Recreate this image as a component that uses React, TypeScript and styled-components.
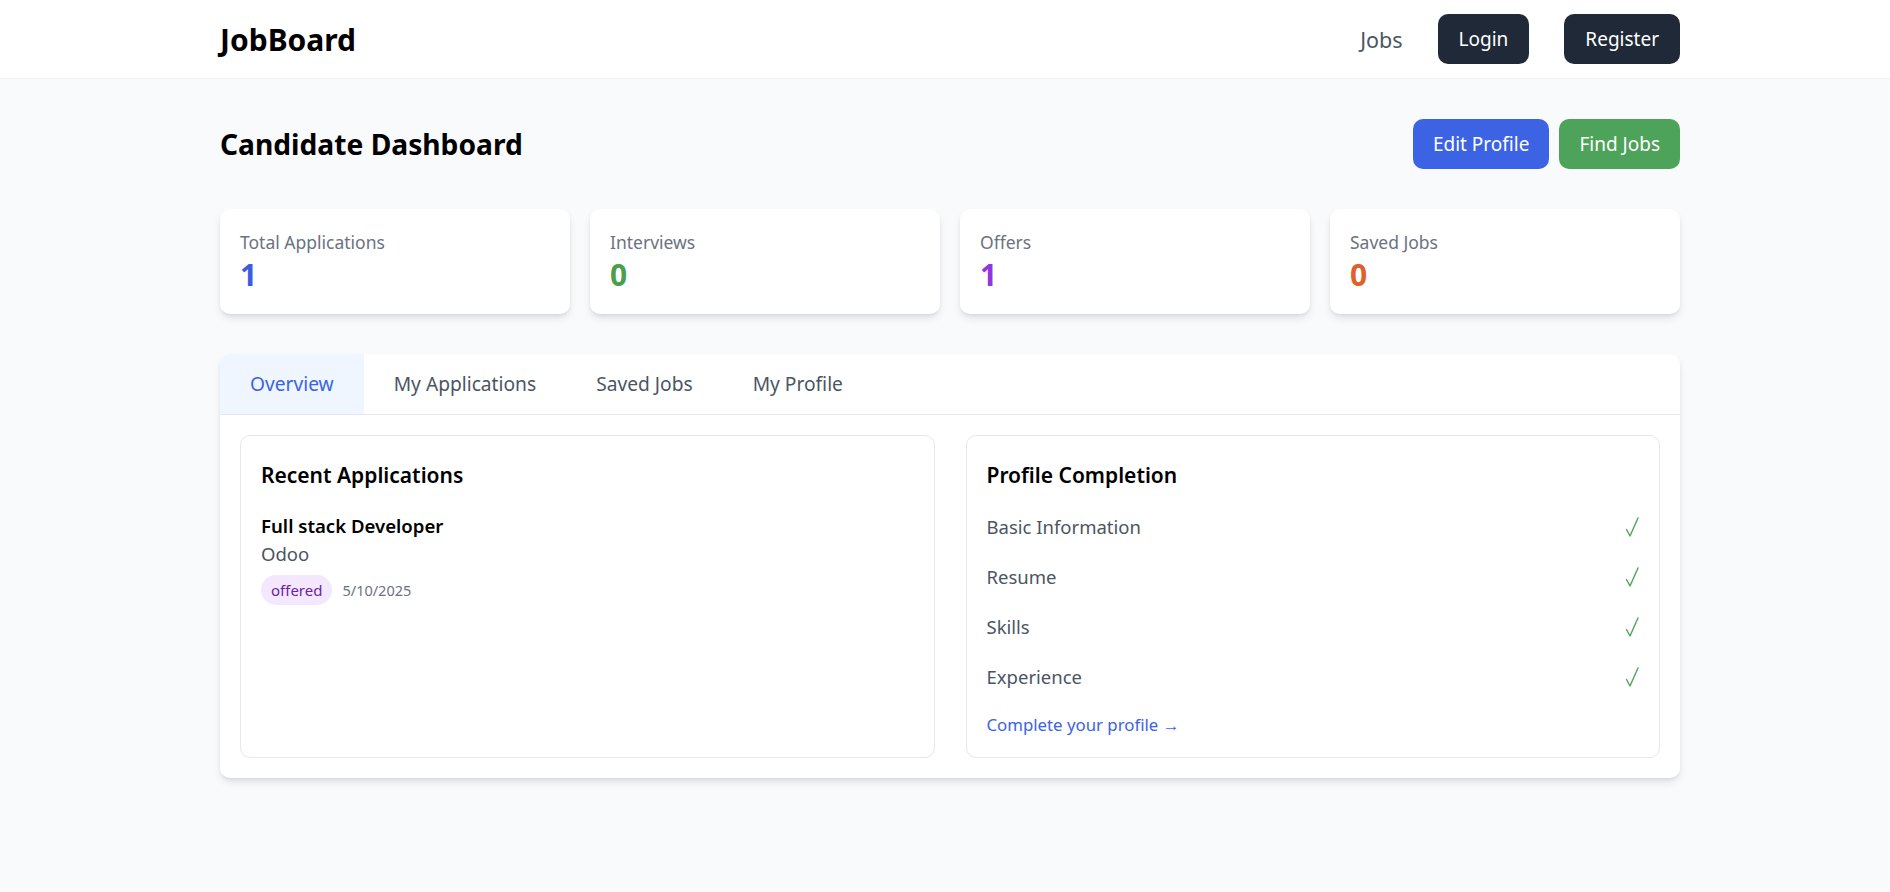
import React, { useState } from "react";
import styled, { createGlobalStyle } from "styled-components";

const GlobalStyle = createGlobalStyle`
  * { box-sizing: border-box; }
  body {
    margin: 0;
    background: #f9fafb;
    font-family: "Segoe UI", "Noto Sans", "Open Sans", sans-serif;
    color: #111827;
  }
`;

const stats = [
  { label: "Total Applications", value: 1, color: "#3b5ee0" },
  { label: "Interviews", value: 0, color: "#4a9f4f" },
  { label: "Offers", value: 1, color: "#9035e0" },
  { label: "Saved Jobs", value: 0, color: "#e0602a" },
];

const tabs = ["Overview", "My Applications", "Saved Jobs", "My Profile"];

const profileItems = ["Basic Information", "Resume", "Skills", "Experience"];

const CheckIcon = () => (
  <svg width="14" height="20" viewBox="0 0 14 20" fill="none">
    <path
      d="M1.5 12.5 L5 19 L13 1"
      stroke="#4ea35a"
      strokeWidth="1.4"
      strokeLinecap="round"
      strokeLinejoin="round"
    />
  </svg>
);

export default function App() {
  const [activeTab, setActiveTab] = useState("Overview");

  return (
    <Page>
      <GlobalStyle />
      <Header>
        <Container>
          <HeaderRow>
            <Logo>JobBoard</Logo>
            <Nav>
              <NavLink>Jobs</NavLink>
              <DarkButton>Login</DarkButton>
              <DarkButton>Register</DarkButton>
            </Nav>
          </HeaderRow>
        </Container>
      </Header>

      <Main>
        <Container>
          <TitleRow>
            <Title>Candidate Dashboard</Title>
            <Actions>
              <ActionButton $bg="#3b63e4">Edit Profile</ActionButton>
              <ActionButton $bg="#4ea35a">Find Jobs</ActionButton>
            </Actions>
          </TitleRow>

          <StatGrid>
            {stats.map((s) => (
              <StatCard key={s.label}>
                <StatLabel>{s.label}</StatLabel>
                <StatValue $color={s.color}>{s.value}</StatValue>
              </StatCard>
            ))}
          </StatGrid>

          <Panel>
            <TabBar>
              {tabs.map((t) => (
                <Tab
                  key={t}
                  $active={t === activeTab}
                  onClick={() => setActiveTab(t)}
                >
                  {t}
                </Tab>
              ))}
            </TabBar>
            <PanelBody>
              <InnerCard>
                <CardTitle>Recent Applications</CardTitle>
                <JobTitle>Full stack Developer</JobTitle>
                <Company>Odoo</Company>
                <MetaRow>
                  <Badge>offered</Badge>
                  <DateText>5/10/2025</DateText>
                </MetaRow>
              </InnerCard>
              <InnerCard>
                <CardTitle>Profile Completion</CardTitle>
                <CheckList>
                  {profileItems.map((item) => (
                    <CheckRow key={item}>
                      <span>{item}</span>
                      <CheckIcon />
                    </CheckRow>
                  ))}
                </CheckList>
                <ProfileLink href="#">Complete your profile →</ProfileLink>
              </InnerCard>
            </PanelBody>
          </Panel>
        </Container>
      </Main>
    </Page>
  );
}

const Page = styled.div`
  min-height: 100vh;
  background: #f9fafb;
`;

const Container = styled.div`
  max-width: 1470px;
  margin: 0 auto;
  padding-left: 10px;
`;

const Header = styled.header`
  background: #ffffff;
  height: 79px;
  border-bottom: 1px solid #f0f1f3;
`;

const HeaderRow = styled.div`
  display: flex;
  align-items: center;
  justify-content: space-between;
  height: 78px;
`;

const Logo = styled.div`
  font-size: 30px;
  font-weight: 700;
  color: #000;
`;

const Nav = styled.nav`
  display: flex;
  align-items: center;
  gap: 35px;
`;

const NavLink = styled.a`
  font-size: 21.5px;
  color: #4b5563;
  cursor: pointer;
`;

const DarkButton = styled.button`
  font-family: inherit;
  font-size: 19px;
  line-height: 30px;
  padding: 10px 21px;
  background: #1f2937;
  color: #fff;
  border: none;
  border-radius: 10px;
  cursor: pointer;
`;

const Main = styled.main`
  padding-top: 40px;
`;

const TitleRow = styled.div`
  display: flex;
  align-items: center;
  justify-content: space-between;
`;

const Title = styled.h1`
  margin: 0;
  font-size: 28.2px;
  font-weight: 700;
  color: #000;
`;

const Actions = styled.div`
  display: flex;
  gap: 10px;
`;

const ActionButton = styled.button<{ $bg: string }>`
  font-family: inherit;
  font-size: 19px;
  line-height: 30px;
  padding: 10px 20px;
  background: ${(p) => p.$bg};
  color: #fff;
  border: none;
  border-radius: 10px;
  cursor: pointer;
`;

const StatGrid = styled.div`
  display: grid;
  grid-template-columns: repeat(4, 1fr);
  gap: 20px;
  margin-top: 40px;
`;

const StatCard = styled.div`
  background: #fff;
  border-radius: 10px;
  padding: 19px 20px 20px;
  height: 105px;
  box-shadow: 0 5px 8px -1px rgba(0, 0, 0, 0.1), 0 2px 5px -2px rgba(0, 0, 0, 0.1);
`;

const StatLabel = styled.div`
  font-size: 17.5px;
  line-height: 28px;
  color: #6b7280;
`;

const StatValue = styled.div<{ $color: string }>`
  font-size: 30px;
  line-height: 38px;
  font-weight: 700;
  color: ${(p) => p.$color};
`;

const Panel = styled.section`
  margin-top: 40px;
  background: #fff;
  border-radius: 10px;
  box-shadow: 0 5px 8px -1px rgba(0, 0, 0, 0.1), 0 2px 5px -2px rgba(0, 0, 0, 0.1);
  overflow: hidden;
`;

const TabBar = styled.div`
  display: flex;
  border-bottom: 1px solid #e5e7eb;
`;

const Tab = styled.button<{ $active: boolean }>`
  font-family: inherit;
  font-size: 19.2px;
  line-height: 30px;
  padding: 15px 30px 15px;
  border: none;
  background: ${(p) => (p.$active ? "#eff6ff" : "transparent")};
  color: ${(p) => (p.$active ? "#3b63e4" : "#4b5563")};
  cursor: pointer;
`;

const PanelBody = styled.div`
  display: grid;
  grid-template-columns: 1fr 1fr;
  gap: 31px;
  padding: 20px;
`;

const InnerCard = styled.div`
  border: 1px solid #e5e7eb;
  border-radius: 10px;
  padding: 20px;
  min-height: 323px;
`;

const CardTitle = styled.h3`
  margin: 0 0 18px;
  font-size: 21px;
  line-height: 38px;
  font-weight: 600;
  color: #000;
`;

const JobTitle = styled.div`
  font-size: 18.6px;
  line-height: 28px;
  font-weight: 600;
  color: #000;
`;

const Company = styled.div`
  font-size: 18.5px;
  line-height: 28px;
  color: #4b5563;
`;

const MetaRow = styled.div`
  display: flex;
  align-items: center;
  gap: 10px;
  margin-top: 7px;
`;

const Badge = styled.span`
  font-size: 15px;
  line-height: 20px;
  padding: 5px 10px;
  border-radius: 999px;
  background: #f3e8ff;
  color: #6b21a8;
`;

const DateText = styled.span`
  font-size: 14.5px;
  color: #6b7280;
`;

const CheckList = styled.div`
  display: flex;
  flex-direction: column;
  gap: 20px;
`;

const CheckRow = styled.div`
  display: flex;
  justify-content: space-between;
  align-items: center;
  font-size: 18.5px;
  line-height: 30px;
  color: #4b5563;
`;

const ProfileLink = styled.a`
  display: inline-block;
  margin-top: 20px;
  font-size: 16.8px;
  line-height: 25px;
  color: #3b63e4;
  text-decoration: none;
`;
